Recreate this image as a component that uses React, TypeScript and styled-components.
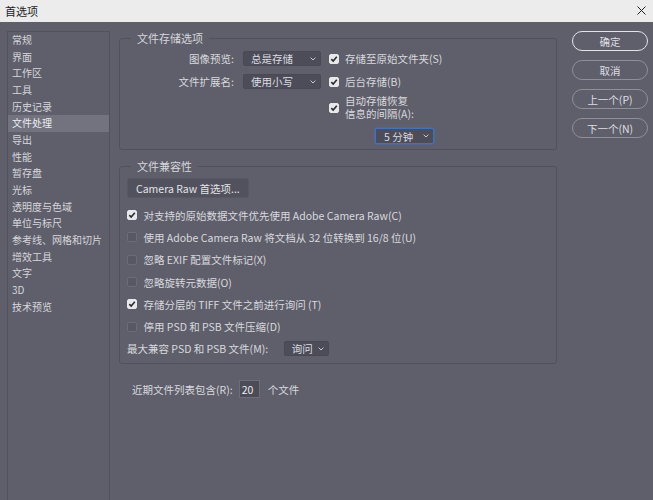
import React from 'react';
import styled, {createGlobalStyle} from 'styled-components';

const GlobalStyle = createGlobalStyle`
  html, body {
    margin: 0;
    padding: 0;
    background: #5e5f6b;
  }
  body {
    font-family: "Noto Sans CJK SC", "Noto Sans", sans-serif;
    font-size: 10.5px;
    color: #d9d9dd;
  }
`;

const sideItems = [
    '常规', '界面', '工作区', '工具', '历史记录', '文件处理', '导出', '性能', '暂存盘', '光标',
    '透明度与色域', '单位与标尺', '参考线、网格和切片', '增效工具', '文字', '3D', '技术预览'
];

const compatItems = [
    {label: '对支持的原始数据文件优先使用 Adobe Camera Raw(C)', checked: true},
    {label: '使用 Adobe Camera Raw 将文档从 32 位转换到 16/8 位(U)', checked: false},
    {label: '忽略 EXIF 配置文件标记(X)', checked: false},
    {label: '忽略旋转元数据(O)', checked: false},
    {label: '存储分层的 TIFF 文件之前进行询问 (T)', checked: true},
    {label: '停用 PSD 和 PSB 文件压缩(D)', checked: false}
];

const Chevron = () => (
    <svg width="6" height="4" viewBox="0 0 6 4">
        <path d="M0.6 0.6 L3 3 L5.4 0.6" fill="none" stroke="#c9c9cf" strokeWidth="1"/>
    </svg>
);

const Check = ({checked}: {checked: boolean}) => (
    <CheckBox $checked={checked}>
        {checked && (
            <svg width="8" height="8" viewBox="0 0 8 8">
                <path d="M1.3 4.1 L3.2 6 L6.8 1.8" fill="none" stroke="#2a2b31" strokeWidth="1.6"/>
            </svg>
        )}
    </CheckBox>
);

export default function App() {
    return (
        <>
            <GlobalStyle/>
            <Window>
                <TitleBar>
                    <TitleText>首选项</TitleText>
                    <svg width="9" height="9" viewBox="0 0 9 9">
                        <path d="M0.5 0.5 L8.5 8.5 M8.5 0.5 L0.5 8.5" stroke="#222" strokeWidth="1"/>
                    </svg>
                </TitleBar>

                <Body>
                    <SideList>
                        {sideItems.map(item => (
                            <SideItem key={item} $active={item === '文件处理'}>{item}</SideItem>
                        ))}
                    </SideList>

                    <Main>
                        <Group>
                            <Legend>文件存储选项</Legend>
                            <SaveGrid>
                                <FieldLabel>图像预览:</FieldLabel>
                                <Select $w={78}>总是存储<Chevron/></Select>
                                <CheckRow><Check checked/>存储至原始文件夹(S)</CheckRow>

                                <FieldLabel>文件扩展名:</FieldLabel>
                                <Select $w={78}>使用小写<Chevron/></Select>
                                <CheckRow><Check checked/>后台存储(B)</CheckRow>

                                <AutoSaveRow>
                                    <Check checked/>
                                    <TwoLine>
                                        <span>自动存储恢复</span>
                                        <span>信息的间隔(A):</span>
                                    </TwoLine>
                                </AutoSaveRow>

                                <IntervalSelect $w={59} $focus>5 分钟<Chevron/></IntervalSelect>
                            </SaveGrid>
                        </Group>

                        <Group>
                            <Legend>文件兼容性</Legend>
                            <RawButton>Camera Raw 首选项...</RawButton>
                            <CompatList>
                                {compatItems.map(item => (
                                    <CompatRow key={item.label}>
                                        <Check checked={item.checked}/>
                                        {item.label}
                                    </CompatRow>
                                ))}
                                <CompatRow>
                                    最大兼容 PSD 和 PSB 文件(M):
                                    <Select $w={45}>询问<Chevron/></Select>
                                </CompatRow>
                            </CompatList>
                        </Group>

                        <RecentRow>
                            近期文件列表包含(R):
                            <NumberBox>20</NumberBox>
                            个文件
                        </RecentRow>
                    </Main>

                    <Buttons>
                        <PillButton $primary>确定</PillButton>
                        <PillButton>取消</PillButton>
                        <PillButton>上一个(P)</PillButton>
                        <PillButton>下一个(N)</PillButton>
                    </Buttons>
                </Body>
            </Window>
        </>
    );
}

const Window = styled.div`
  width: 653px;
  height: 500px;
  overflow: hidden;
  display: flex;
  flex-direction: column;
`;

const TitleBar = styled.div`
  height: 22px;
  flex: none;
  background: #ececec;
  display: flex;
  align-items: center;
  justify-content: space-between;
  padding: 0 7px 1px 5px;
  box-sizing: border-box;
`;

const TitleText = styled.span`
  color: #1c1c1c;
  font-size: 11px;
`;

const Body = styled.div`
  flex: 1;
  display: flex;
  padding: 9px 6px 0 7px;
  min-height: 0;
`;

const SideList = styled.div`
  width: 103px;
  flex: none;
  box-sizing: border-box;
  border: 1px solid #51525c;
  border-bottom: none;
  margin-bottom: -20px;
`;

const SideItem = styled.div<{$active?: boolean}>`
  height: 16.67px;
  line-height: 16.67px;
  padding-left: 4px;
  white-space: nowrap;
  font-size: 10px;
  background: ${({$active}) => ($active ? '#72737f' : 'transparent')};
  color: ${({$active}) => ($active ? '#ececf0' : '#d6d6da')};
`;

const Main = styled.div`
  width: 438px;
  margin-left: 9px;
  flex: none;
  display: flex;
  flex-direction: column;
  gap: 9px;
`;

const Group = styled.fieldset`
  margin: 0;
  border: 1px solid #50515b;
  border-radius: 3px;
  padding: 0 7px 3px;
  min-width: 0;
`;

const Legend = styled.legend`
  margin-left: 4px;
  padding: 0 6px;
  line-height: 14px;
  font-size: 11px;
  color: #d6d6da;
`;

const SaveGrid = styled.div`
  display: grid;
  grid-template-columns: 108px 78px 1fr;
  grid-template-rows: 15px 15px 25px 16px;
  column-gap: 8px;
  row-gap: 8px;
  padding: 6px 0 0;
`;

const FieldLabel = styled.div`
  text-align: right;
  line-height: 15px;
  white-space: nowrap;
  padding-right: 1px;
`;

const Select = styled.div<{$w: number; $focus?: boolean}>`
  width: ${({$w}) => $w}px;
  height: 15px;
  box-sizing: border-box;
  background: #4c4d58;
  border: 1px solid ${({$focus}) => ($focus ? '#3f72c0' : '#484953')};
  box-shadow: ${({$focus}) => ($focus ? '0 0 0 0.5px #3f72c0' : 'none')};
  border-radius: 2px;
  display: flex;
  align-items: center;
  justify-content: space-between;
  padding: 0 4px 0 7px;
  white-space: nowrap;
  color: #dcdce0;
`;

const IntervalSelect = styled(Select)`
  grid-column: 3;
  height: 16px;
  margin: -2px 0 0 46px;
  padding-left: 8px;
`;

const CheckRow = styled.div`
  display: flex;
  align-items: center;
  gap: 6px;
  white-space: nowrap;
`;

const AutoSaveRow = styled(CheckRow)`
  grid-column: 3;
  margin-top: -4px;
`;

const TwoLine = styled.div`
  display: flex;
  flex-direction: column;
  line-height: 12.5px;
`;

const CheckBox = styled.span<{$checked: boolean}>`
  width: 10px;
  height: 10px;
  flex: none;
  box-sizing: border-box;
  border-radius: 2px;
  display: flex;
  align-items: center;
  justify-content: center;
  background: ${({$checked}) => ($checked ? '#e8e8ea' : '#575863')};
  border: 1px solid ${({$checked}) => ($checked ? '#e8e8ea' : '#6b6c77')};
`;

const RawButton = styled.div`
  width: 122px;
  height: 20px;
  box-sizing: border-box;
  margin-top: 5px;
  background: #51525d;
  border: 1px solid #575863;
  border-radius: 2px;
  display: flex;
  align-items: center;
  padding-left: 8px;
  white-space: nowrap;
  color: #e2e2e6;
`;

const CompatList = styled.div`
  display: flex;
  flex-direction: column;
  margin-top: 6px;
`;

const CompatRow = styled.div`
  height: 22.3px;
  display: flex;
  align-items: center;
  gap: 6.5px;
  white-space: nowrap;
  & > ${Select} {
    margin-left: 9px;
  }
`;

const RecentRow = styled.div`
  display: flex;
  align-items: center;
  padding-left: 13px;
  margin-top: 7px;
  white-space: nowrap;
`;

const NumberBox = styled.div`
  width: 21px;
  height: 18px;
  box-sizing: border-box;
  margin: 0 8px 0 6px;
  background: #4b4c57;
  border: 1px solid #6d6e79;
  display: flex;
  align-items: center;
  padding-left: 2px;
  color: #ececf0;
`;

const Buttons = styled.div`
  width: 76px;
  margin-left: 15px;
  flex: none;
  display: flex;
  flex-direction: column;
  gap: 9px;
`;

const PillButton = styled.div<{$primary?: boolean}>`
  height: 20px;
  box-sizing: border-box;
  border-radius: 10px;
  border: ${({$primary}) => ($primary ? '1.5px solid #e4e4e8' : '1px solid #8e8f99')};
  display: flex;
  align-items: center;
  justify-content: center;
  color: #dedee2;
  white-space: nowrap;
`;
